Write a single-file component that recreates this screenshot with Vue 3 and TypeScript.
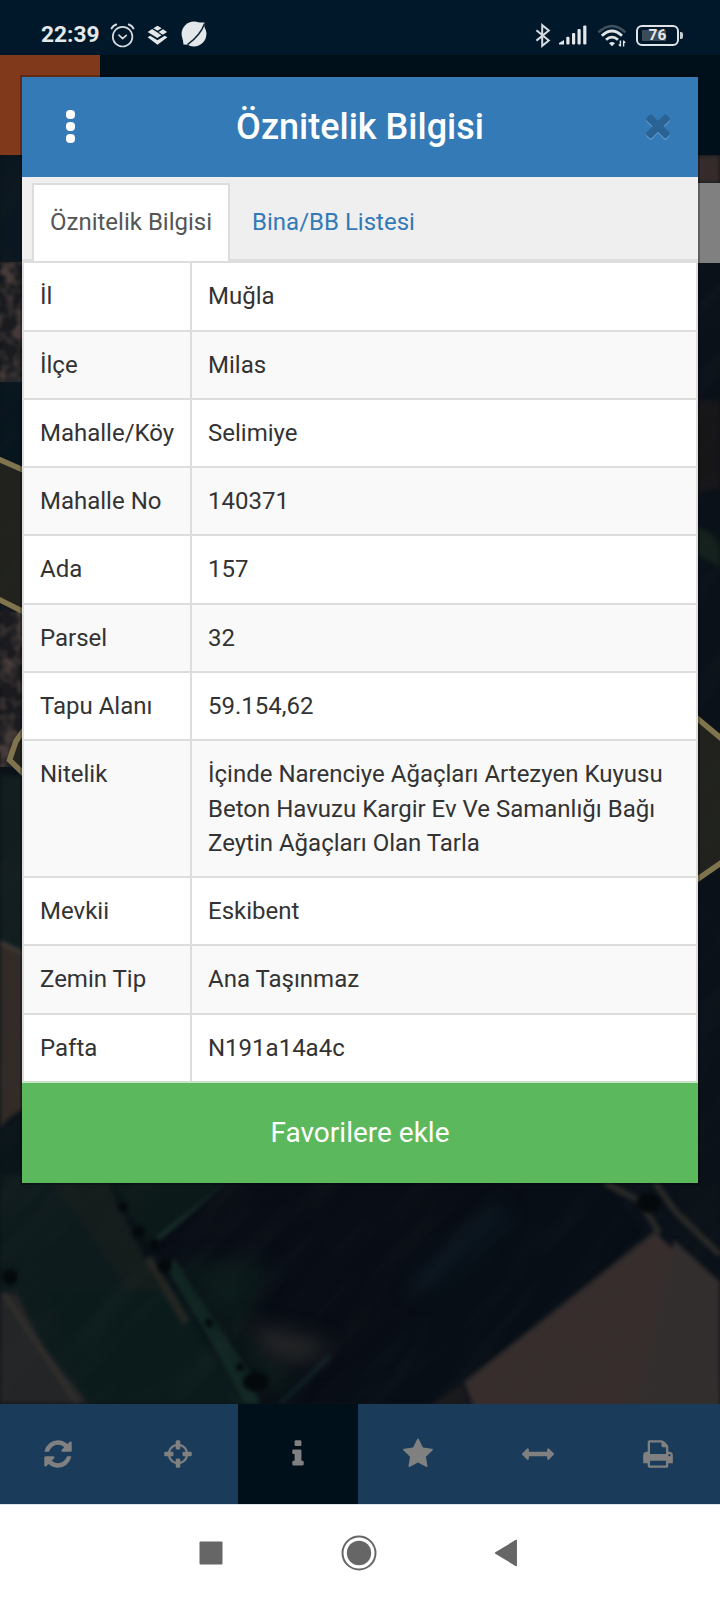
<script setup lang="ts">
interface Row {
  label: string
  value: string
  tall?: boolean
}

interface Tool {
  name: string
  path: string
  active?: boolean
}

const rows: Row[] = [
  { label: 'İl', value: 'Muğla' },
  { label: 'İlçe', value: 'Milas' },
  { label: 'Mahalle/Köy', value: 'Selimiye' },
  { label: 'Mahalle No', value: '140371' },
  { label: 'Ada', value: '157' },
  { label: 'Parsel', value: '32' },
  { label: 'Tapu Alanı', value: '59.154,62' },
  {
    label: 'Nitelik',
    value: 'İçinde Narenciye Ağaçları Artezyen Kuyusu Beton Havuzu Kargir Ev Ve Samanlığı Bağı Zeytin Ağaçları Olan Tarla',
    tall: true,
  },
  { label: 'Mevkii', value: 'Eskibent' },
  { label: 'Zemin Tip', value: 'Ana Taşınmaz' },
  { label: 'Pafta', value: 'N191a14a4c' },
]

const tools: Tool[] = [
  {
    name: 'refresh',
    path: 'M1639 1056q0 5-1 7-64 268-268 434.5t-478 166.5q-146 0-282.5-55t-243.5-157l-129 129q-19 19-45 19t-45-19-19-45v-448q0-26 19-45t45-19h448q26 0 45 19t19 45-19 45l-137 137q71 66 161 102t187 36q134 0 250-65t186-179q11-17 53-117 8-23 30-23h192q13 0 22.5 9.5t9.5 22.5zm25-800v448q0 26-19 45t-45 19h-448q-26 0-45-19t-19-45 19-45l138-138q-148-137-349-137-134 0-250 65t-186 179q-11 17-53 117-8 23-30 23h-199q-13 0-22.5-9.5t-9.5-22.5v-7q65-268 270-434.5t480-166.5q146 0 284 55.5t245 156.5l130-129q19-19 45-19t45 19 19 45z',
  },
  {
    name: 'locate',
    path: 'M1325 1024h-109q-26 0-45-19t-19-45v-128q0-26 19-45t45-19h109q-32-108-112.5-188.5t-188.5-112.5v109q0 26-19 45t-45 19h-128q-26 0-45-19t-19-45v-109q-108 32-188.5 112.5t-112.5 188.5h109q26 0 45 19t19 45v128q0 26-19 45t-45 19h-109q32 108 112.5 188.5t188.5 112.5v-109q0-26 19-45t45-19h128q26 0 45 19t19 45v109q108-32 188.5-112.5t112.5-188.5zm339-192v128q0 26-19 45t-45 19h-143q-37 161-154.5 278.5t-278.5 154.5v143q0 26-19 45t-45 19h-128q-26 0-45-19t-19-45v-143q-161-37-278.5-154.5t-154.5-278.5h-143q-26 0-45-19t-19-45v-128q0-26 19-45t45-19h143q37-161 154.5-278.5t278.5-154.5v-143q0-26 19-45t45-19h128q26 0 45 19t19 45v143q161 37 278.5 154.5t154.5 278.5h143q26 0 45 19t19 45z',
  },
  {
    name: 'info',
    active: true,
    path: 'M1216 1344v128q0 26-19 45t-45 19h-512q-26 0-45-19t-19-45v-128q0-26 19-45t45-19h64v-384h-64q-26 0-45-19t-19-45v-128q0-26 19-45t45-19h384q26 0 45 19t19 45v576h64q26 0 45 19t19 45zm-128-1152v192q0 26-19 45t-45 19h-256q-26 0-45-19t-19-45v-192q0-26 19-45t45-19h256q26 0 45 19t19 45z',
  },
  {
    name: 'favorites',
    path: 'M1728 647q0 22-26 48l-363 354 86 500q1 7 1 20 0 21-10.5 35.5t-30.5 14.5q-19 0-40-12l-449-236-449 236q-22 12-40 12-21 0-31.5-14.5t-10.5-35.5q0-6 2-20l86-500-364-354q-25-27-25-48 0-37 56-46l502-73 225-455q19-41 49-41t49 41l225 455 502 73q56 9 56 46z',
  },
  {
    name: 'measure',
    path: 'M1792 896q0 26-19 45l-256 256q-19 19-45 19t-45-19-19-45v-128h-1024v128q0 26-19 45t-45 19-45-19l-256-256q-19-19-19-45t19-45l256-256q19-19 45-19t45 19 19 45v128h1024v-128q0-26 19-45t45-19 45 19l256 256q19 19 19 45z',
  },
  {
    name: 'print',
    path: 'M448 1536h896v-256h-896v256zm0-640h896v-384h-160q-40 0-68-28t-28-68v-160h-640v640zm1152 64q0-26-19-45t-45-19-45 19-19 45 19 45 45 19 45-19 19-45zm128 0v416q0 13-9.5 22.5t-22.5 9.5h-224v160q0 40-28 68t-68 28h-960q-40 0-68-28t-28-68v-160h-224q-13 0-22.5-9.5t-9.5-22.5v-416q0-79 56.5-135.5t135.5-56.5h64v-544q0-40 28-68t68-28h672q40 0 88 20t76 48l152 152q28 28 48 76t20 88v256h64q79 0 135.5 56.5t56.5 135.5z',
  },
]

const closePath =
  'M1490 1322q0 40-28 68l-136 136q-28 28-68 28t-68-28l-294-294-294 294q-28 28-68 28t-68-28l-136-136q-28-28-28-68t28-68l294-294-294-294q-28-28-28-68t28-68l136-136q28-28 68-28t68 28l294 294 294-294q28-28 68-28t68 28l136 136q28 28 28 68t-28 68l-294 294 294 294q28 28 28 68z'
</script>

<template>
  <div class="phone">
    <header class="status">
      <span class="clock">22:39</span>
      <svg class="alarm" width="25" height="26" viewBox="0 0 25 26" fill="none" stroke="#d5dbdf" stroke-width="1.7" stroke-linecap="round">
        <circle cx="12.6" cy="14.7" r="9.8" />
        <path d="M9 13.2l3.6 3.4 3.7-3.2" />
        <path d="M1.6 6.4Q3 3.6 6.1 2.5M23.4 6.4Q22 3.6 18.9 2.5" stroke-width="2.1" />
      </svg>
      <svg class="layers" width="21" height="21" viewBox="0 0 21 21" fill="#e4e8ea">
        <path d="M10.5.7l4.2 2.5-4.2 2.6-4.2-2.6z" />
        <path d="M5.2 4.1l9.3 6.2-4.2 2.6L.7 7z" />
        <path d="M16 4.3l4.1 2.7-4.3 2.8-4.2-2.9z" />
        <path d="M.6 12.2l2.6-1.5 7.3 4.6 7.2-4.6 2.7 1.5-9.9 7.5z" />
      </svg>
      <svg class="ball" width="28" height="28" viewBox="0 0 28 28">
        <circle cx="14" cy="14" r="12.4" fill="#e4e8ea" />
        <path d="M18 2.6L24.6 2.6 24.3 8.5zM2.7 18.5l.8 6 6 .2z" fill="#e4e8ea" />
        <path d="M24.6 3.4Q20.5 15 7.5 24.6" fill="none" stroke="#0b2233" stroke-width="1.5" />
      </svg>
      <span class="gap"></span>
      <svg class="bluetooth" width="16" height="25" viewBox="0 0 16 25" fill="none" stroke="#d5dbdf" stroke-width="2">
        <path d="M1.4 7.2l12.4 10.2-6.6 5.4V2.2L13.8 7.6 1.4 17.6" />
      </svg>
      <svg class="signal" width="28" height="20" viewBox="0 0 28 20" fill="#e4e8ea">
        <path d="M0 19.5v-1.6l5-3v4.6z" />
        <rect x="7.3" y="11.8" width="3.2" height="7.7" rx="1" />
        <rect x="13" y="8" width="3.2" height="11.5" rx="1" />
        <rect x="18.5" y="4" width="3.2" height="15.5" rx="1" />
        <rect x="24.2" y="0.4" width="3.2" height="19.1" rx="1" />
      </svg>
      <svg class="wifi" width="30" height="24" viewBox="0 0 30 24" fill="none" stroke="#dfe4e7" stroke-width="2.8">
        <path d="M1.4 8.4Q15-4.6 28.4 8.4" stroke="#405160" stroke-width="2.4" />
        <path d="M4.8 11.8q10.2-9.6 20.2 0" />
        <path d="M9 15.8q6-5.4 12 0" />
        <path d="M12 19.3q3-2.6 6 0l-3 3z" fill="#dfe4e7" stroke="none" />
        <path d="M23.4 16.6v6M26.6 16.6v6M21.8 20.4l1.6 1.6M28.2 18.8l-1.6-1.6" stroke-width="1.4" />
      </svg>
      <span class="battery"><span class="battery-text">76</span></span>
      <span class="battery-cap"></span>
    </header>

    <main class="app">
      <svg class="map" width="720" height="1249" viewBox="0 155 720 1249" aria-hidden="true">
        <defs>
          <filter id="soft" x="-5%" y="-5%" width="110%" height="110%" color-interpolation-filters="sRGB">
            <feGaussianBlur stdDeviation="2" />
          </filter>
          <filter id="haze" x="-50%" y="-50%" width="200%" height="200%" color-interpolation-filters="sRGB">
            <feGaussianBlur stdDeviation="10" />
          </filter>
          <filter id="scrub" x="0" y="0" width="100%" height="100%" color-interpolation-filters="sRGB">
            <feTurbulence type="fractalNoise" baseFrequency="0.07" numOctaves="2" seed="4" />
            <feColorMatrix values="0 0 0 0 0.27  0 0 0 0 0.23  0 0 0 0 0.22  3 0 0 0 -1.2" />
          </filter>
          <filter id="grain" x="0" y="0" width="100%" height="100%" color-interpolation-filters="sRGB">
            <feTurbulence type="fractalNoise" baseFrequency="0.008 0.05" numOctaves="3" seed="9" />
            <feColorMatrix values="0 0 0 0 0.2  0 0 0 0 0.22  0 0 0 0 0.22  1 0 0 0 -0.4" />
          </filter>
          <clipPath id="ground"><rect y="155" width="720" height="1249" /></clipPath>
        </defs>
        <rect y="155" width="720" height="1249" fill="#0a1118" />
        <g filter="url(#soft)">
          <path d="M0 155h30v110H0z" fill="#0b1720" />
          <path d="M0 262h30v120H0z" fill="#191b1f" />
          <path d="M0 380h30v90L0 459z" fill="#07151e" />
          <path d="M0 604l30 12v150H0z" fill="#1b1b1f" />
          <path d="M0 775h30v180l-30-12z" fill="#121d1f" />
          <path d="M0 943l30 14v150q-22 8-30 22z" fill="#322b27" />
          <path d="M0 942l30 14" stroke="#49443b" stroke-width="3" />
          <path d="M0 1130l30-20v90H0z" fill="#0a151a" />
          <path d="M690 155h30v28h-30z" fill="#352b2a" />
          <path d="M690 400h30v90h-30z" fill="#161619" />
          <path d="M690 525q25 5 30 22v20q-20-12-30-12z" fill="#15211d" />

          <path d="M0 1175h105l45 100 105 129H0z" fill="#0e1b1c" />
          <path d="M45 1175h60l45 95 50 84-42-20-60-90z" fill="#141d1b" />
          <path d="M45 1290h130l70 114H90z" fill="#0b1b1b" />
          <path d="M105 1175h125l-80 72z" fill="#0b1918" />
          <path d="M228 1183l-77 61" stroke="#1c332f" stroke-width="4" />
          <path d="M226 1183h380l36 50-178 171H262L152 1247z" fill="#080d15" />
          <path d="M540 1183h65l32 46-172 170H335z" fill="#070e16" />
          <path d="M174 1258l78 116 8 30h-14l-35-62-45-75z" fill="#132a24" />
          <path d="M148 1258l38 64" stroke="#262724" stroke-width="8" />
          <path d="M0 1292l17 2 26 52 46 58H0z" fill="#242526" />
          <path d="M4 1294l24 36 50 74" stroke="#302f2c" stroke-width="5" fill="none" />
          <path d="M655 1232l65 62v120H476l-12-32z" fill="#372d2d" />
          <path d="M674 1240l46 42v132h-84z" fill="#332e2e" />
          <path d="M464 1383l193-152" stroke="#2c2928" stroke-width="3" />
          <path d="M605 1183l35 18 18 30 2-2M655 1183l20 28 45 44" stroke="#2b2a28" stroke-width="6" fill="none" />
          <path d="M672 1183h48v64l-36-36z" fill="#0b1218" />
          <path d="M462 1384l12 30h-55z" fill="#19191c" />
          <path d="M280 1404l50-48" stroke="#132b31" stroke-width="3" />
        </g>
        <path d="M175 1262h95l-30 70 60 50-30 18z" fill="#0b1a1a" filter="url(#haze)" />
        <path d="M246 1322l82 20-14 20-42-3z" fill="#252627" filter="url(#haze)" />
        <path d="M505 1210l-90 80" stroke="#0d1d27" stroke-width="12" filter="url(#haze)" />
        <rect x="0" y="262" width="24" height="120" filter="url(#scrub)" />
        <rect x="0" y="612" width="24" height="155" filter="url(#scrub)" />
        <g clip-path="url(#ground)">
          <rect x="-900" y="-500" width="2400" height="2600" filter="url(#grain)" opacity="0.25" transform="rotate(-46 360 780)" />
        </g>
        <g fill="#04090c" filter="url(#soft)">
          <ellipse cx="648" cy="1203" rx="12" ry="10" />
          <ellipse cx="256" cy="1382" rx="13" ry="10" />
          <circle cx="10" cy="1277" r="8" />
          <circle cx="123" cy="1207" r="5" />
          <circle cx="139" cy="1232" r="6" />
          <circle cx="154" cy="1244" r="6" />
          <circle cx="165" cy="1266" r="7" />
          <circle cx="209" cy="1323" r="4" />
          <circle cx="240" cy="1367" r="4" />
        </g>
        <g fill="#23241f" fill-opacity="0.95" stroke="#80744e" stroke-width="5.5">
          <path d="M-6 457l36 16v142L-6 597z" />
          <path d="M30 722L16 741 9.5 760 30 780z" />
          <path d="M692 714l36 30v114l-36 25z" />
        </g>
        <rect x="690" y="183" width="30" height="80" fill="#808080" />
      </svg>
      <div class="app-bar"><span class="app-logo"></span></div>

      <nav class="toolbar">
        <span v-for="tool in tools" :key="tool.name" class="tool" :class="{ active: tool.active }">
          <svg width="32" height="32" viewBox="0 0 1792 1792"><path :d="tool.path" /></svg>
        </span>
      </nav>
    </main>

    <footer class="navigation">
      <svg width="24" height="24" viewBox="0 0 24 24"><rect x="0.5" y="0.5" width="23" height="23" rx="1" /></svg>
      <svg width="36" height="36" viewBox="0 0 36 36">
        <circle cx="18" cy="18" r="16.5" class="ring" />
        <circle cx="18" cy="18" r="12.2" />
      </svg>
      <svg width="24" height="28" viewBox="0 0 24 28"><path d="M21.2 1.5v25L.7 14z" stroke="#666" stroke-width="1.5" stroke-linejoin="round" /></svg>
    </footer>

    <section class="modal">
      <div class="modal-header">
        <span class="menu"><i></i><i></i><i></i></span>
        <h1>Öznitelik Bilgisi</h1>
        <svg class="close" width="36" height="36" viewBox="0 0 1792 1792">
          <path :d="closePath" fill="#5f98c9" transform="translate(0 75)" />
          <path :d="closePath" fill="#2a6293" />
        </svg>
      </div>
      <div class="tabs">
        <a class="tab current">Öznitelik Bilgisi</a>
        <a class="tab">Bina/BB Listesi</a>
      </div>
      <div class="table">
        <div v-for="row in rows" :key="row.label" class="row" :class="{ tall: row.tall }">
          <div class="label">{{ row.label }}</div>
          <div class="value">{{ row.value }}</div>
        </div>
      </div>
      <button class="favorite">Favorilere ekle</button>
    </section>
  </div>
</template>

<style>
body {
  margin: 0;
}
</style>

<style scoped>
.phone {
  position: relative;
  display: flex;
  flex-direction: column;
  width: 720px;
  height: 1600px;
  overflow: hidden;
  background: #fff;
  font-family: Roboto, "Noto Sans", sans-serif;
}

.phone * {
  box-sizing: border-box;
}

svg {
  display: block;
  flex: none;
}

.status {
  display: flex;
  flex: none;
  align-items: center;
  height: 55px;
  padding: 15px 37px 0 41px;
  background: #00182a;
  color: #e4e8ea;
}

.clock {
  width: 58px;
  font-size: 22.7px;
  font-weight: 700;
  line-height: 40px;
  white-space: nowrap;
}

.alarm {
  margin-left: 11px;
}

.layers {
  margin-left: 12px;
}

.ball {
  margin: -3px 0 0 12px;
}

.gap {
  flex: 1;
}

.bluetooth {
  margin-right: -1px;
}

.signal {
  margin-left: 9px;
}

.wifi {
  margin: 2px 0 0 10px;
}

.battery {
  display: flex;
  align-items: center;
  justify-content: center;
  width: 43px;
  height: 21px;
  margin-left: 9px;
  border: 2px solid #dfe4e7;
  border-radius: 6px;
  background: linear-gradient(#3b4b58, #3b4b58) 4px center / 24px 11px no-repeat;
}

.battery-text {
  font-size: 15.5px;
  font-weight: 700;
  line-height: 17px;
}

.battery-cap {
  width: 3px;
  height: 7px;
  margin-left: 1px;
  border-radius: 0 2px 2px 0;
  background: #c5ccd1;
}

.app {
  position: relative;
  display: flex;
  flex: none;
  flex-direction: column;
  justify-content: space-between;
  height: 1449px;
}

.app-bar {
  height: 100px;
  background: #00101b;
}

.app-logo {
  display: block;
  width: 100px;
  height: 100px;
  background: #80391b;
}

.map {
  position: absolute;
  top: 100px;
  left: 0;
}

.toolbar {
  position: relative;
  display: flex;
  height: 100px;
  background: #1a3c5a;
}

.tool {
  display: flex;
  flex: none;
  align-items: center;
  justify-content: center;
  width: 120px;
  padding-bottom: 1px;
  fill: #808080;
}

.tool:first-child {
  width: 118px;
  padding-right: 2px;
}

.active {
  background: #00101b;
}

.navigation {
  display: flex;
  flex: 1;
  align-items: center;
  justify-content: center;
  gap: 118px;
  padding: 0 2px 0 0;
  border-top: 1px solid #dbe5f2;
  fill: #666;
}

.ring {
  fill: none;
  stroke: #666;
  stroke-width: 2;
}

.modal {
  position: absolute;
  top: 77px;
  left: 22px;
  width: 676px;
  height: 1106px;
  background: #fff;
  box-shadow: 0 0 0 2px rgba(0, 0, 0, 0.25);
  color: #333;
  font-size: 24px;
  line-height: 34.286px;
}

.modal-header {
  display: flex;
  align-items: center;
  justify-content: space-between;
  height: 100px;
  padding: 0 22px 0 44px;
  background: #337ab7;
}

.menu {
  display: flex;
  flex-direction: column;
  gap: 3px;
  width: 14px;
  padding-bottom: 1px;
}

.menu i {
  width: 9px;
  height: 9px;
  border-radius: 4px;
  background: #fff;
}

h1 {
  margin: 0;
  color: #fff;
  font-size: 36px;
  font-weight: 500;
  line-height: 50px;
}

.close {
  margin-top: -4px;
}

.tabs {
  display: flex;
  align-items: flex-start;
  gap: 4px;
  height: 84px;
  padding: 6px 0 0 10px;
  background: #efefef;
  box-shadow: inset 0 -2px #ddd;
}

.tab {
  height: 76px;
  padding: 19.5px 16px 0;
  border: 2px solid transparent;
  border-bottom: 0;
  color: #337ab7;
  white-space: nowrap;
}

.current {
  height: 78px;
  border-color: #ddd;
  background: #fff;
  color: #555;
}

.table {
  height: 822px;
  padding-top: 0.25px;
  border-left: 2px solid #ddd;
  border-right: 2px solid #ddd;
}

.row {
  display: flex;
  height: 68.286px;
  border-top: 2px solid #ddd;
  background: #fff;
}

.row:nth-child(even) {
  background: #f9f9f9;
}

.row.tall {
  height: 136.857px;
}

.label,
.value {
  padding: 16px 16px 0;
}

.label {
  flex: none;
  width: 168px;
  border-right: 2px solid #ddd;
  white-space: nowrap;
}

.favorite {
  display: block;
  width: 100%;
  height: 100px;
  padding: 0;
  border: 0;
  background: #5cb85c;
  box-shadow: 0 -2px #c9e3c9;
  color: #fff;
  font: 400 28px/40px Roboto, sans-serif;
}
</style>
